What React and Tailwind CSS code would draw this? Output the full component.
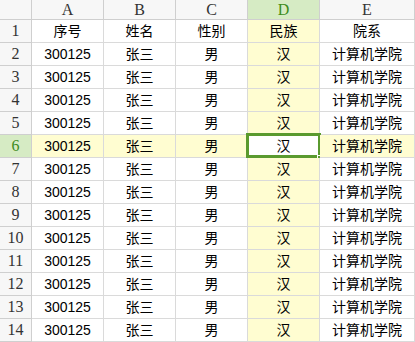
const cols = ["A", "B", "C", "D", "E"];

const header = ["序号", "姓名", "性别", "民族", "院系"];
const rows = Array.from({ length: 13 }, () => ["300125", "张三", "男", "汉", "计算机学院"]);

const SEL_ROW = 6;
const SEL_COL = 3;

const hdrFont = { fontFamily: '"Liberation Serif", "Noto Sans CJK SC", serif' };

const App = () => {
  const data = [header, ...rows];

  return (
    <div
      className="w-[415px] h-[342px] overflow-hidden bg-white text-[14px] text-black"
      style={{ fontFamily: '"Liberation Sans", "Noto Sans CJK SC", sans-serif' }}
    >
      <div className="grid grid-cols-[32px_72px_72px_72px_72px_95px] grid-rows-[20px_repeat(14,23px)]">
        {/* top-left corner */}
        <div className="bg-[#f7f7f7] border-r border-b border-[#cfcfcf]" />
        {cols.map((c, i) => (
          <div
            key={c}
            className={`flex items-center justify-center border-r border-b border-[#cfcfcf] text-[16px] ${
              i === SEL_COL ? "bg-[#d6ebc4] text-[#3d8b1c]" : "bg-[#f7f7f7] text-[#333]"
            }`}
            style={hdrFont}
          >
            {c}
          </div>
        ))}

        {data.map((row, r) => {
          const n = r + 1;
          const selRow = n === SEL_ROW;
          return [
            <div
              key={`h${n}`}
              className={`flex items-center justify-center border-r border-b border-[#cfcfcf] text-[16px] ${
                selRow ? "bg-[#d6ebc4] text-[#3d8b1c]" : "bg-[#f7f7f7] text-[#333]"
              }`}
              style={hdrFont}
            >
              {n}
            </div>,
            ...row.map((v, c) => {
              const isSel = selRow && c === SEL_COL;
              let bg = "bg-white";
              if (!isSel && (selRow || c === SEL_COL)) bg = "bg-[#fffdd1]";
              return (
                <div
                  key={`${n}-${c}`}
                  className={`relative flex items-center justify-center border-r border-b border-[#dadada] ${bg}`}
                >
                  {v}
                  {isSel && (
                    <>
                      <div className="absolute -left-[2px] -top-[2px] w-[75px] h-[25px] border-[3px] border-[#5a9a2f]" />
                      <div className="absolute -right-[3px] -bottom-[3px] w-[5px] h-[5px] bg-[#5a9a2f] border border-white" />
                    </>
                  )}
                </div>
              );
            }),
          ];
        })}
      </div>
    </div>
  );
};

export default App;
